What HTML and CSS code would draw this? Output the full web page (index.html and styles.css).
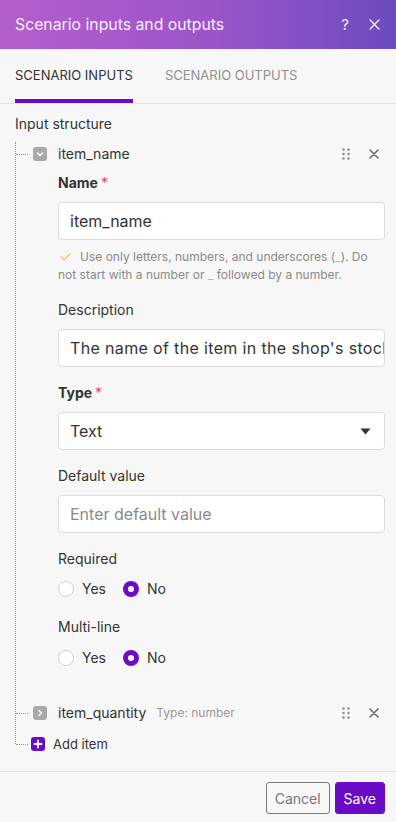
FILE: index.html
```html
<!DOCTYPE html>
<html lang="en">

<head>
    <meta charset="UTF-8">
    <meta name="viewport" content="width=device-width, initial-scale=1.0">
    <title>Scenario inputs and outputs</title>
    <link rel="stylesheet" href="styles.css">
</head>

<body>
    <div class="modal">
        <!-- Header -->
        <div class="modal-header">
            <h1>Scenario inputs and outputs</h1>
            <div class="header-actions">
                <span class="help">?</span>
                <svg class="icon-close" width="11" height="11" viewBox="0 0 10 10">
                    <path d="M1 1L9 9M9 1L1 9" stroke="#f3e8fa" stroke-width="1.3" stroke-linecap="round" />
                </svg>
            </div>
        </div>

        <!-- Tabs -->
        <div class="tabs">
            <div class="tab active">Scenario inputs</div>
            <div class="tab">Scenario outputs</div>
        </div>

        <!-- Body -->
        <div class="modal-body">
            <div class="section-title">Input structure</div>

            <div class="tree">
                <!-- item_name -->
                <div class="node-row">
                    <span class="connector"></span>
                    <span class="toggle">
                        <svg width="14" height="14" viewBox="0 0 14 14">
                            <path d="M4.5 6L7 8.5L9.5 6" fill="none" stroke="#fff" stroke-width="1.5" stroke-linecap="round" stroke-linejoin="round" />
                        </svg>
                    </span>
                    <span class="node-name">item_name</span>
                    <span class="node-actions">
                        <svg width="8" height="12" viewBox="0 0 8 12" fill="#8a8a8a">
                            <circle cx="1.5" cy="1.5" r="1.2" />
                            <circle cx="6.5" cy="1.5" r="1.2" />
                            <circle cx="1.5" cy="6" r="1.2" />
                            <circle cx="6.5" cy="6" r="1.2" />
                            <circle cx="1.5" cy="10.5" r="1.2" />
                            <circle cx="6.5" cy="10.5" r="1.2" />
                        </svg>
                        <svg width="10" height="10" viewBox="0 0 10 10">
                            <path d="M1 1L9 9M9 1L1 9" stroke="#666" stroke-width="1.5" stroke-linecap="round" />
                        </svg>
                    </span>
                </div>

                <div class="node-body">
                    <div class="field">
                        <label class="label strong">Name<span class="req">*</span></label>
                        <div class="input">item_name</div>
                        <p class="hint">
                            <svg class="check" width="11" height="8" viewBox="0 0 11 8">
                                <path d="M1 3.8L4 6.8L10 1" fill="none" stroke="#e8c45e" stroke-width="1.3" stroke-linecap="round" stroke-linejoin="round" />
                            </svg>Use only letters, numbers, and underscores (<span class="us">_</span>). Do not start with a number or <span class="us">_</span> followed by a number.
                        </p>
                    </div>

                    <div class="field">
                        <label class="label">Description</label>
                        <div class="input clip">The name of the item in the shop's stock</div>
                    </div>

                    <div class="field">
                        <label class="label strong">Type<span class="req">*</span></label>
                        <div class="input select">
                            <span>Text</span>
                            <svg width="11" height="7" viewBox="0 0 11 7">
                                <path d="M0.5 0.5H10.5L5.5 6.5Z" fill="#333" />
                            </svg>
                        </div>
                    </div>

                    <div class="field">
                        <label class="label">Default value</label>
                        <div class="input placeholder">Enter default value</div>
                    </div>

                    <div class="field">
                        <label class="label">Required</label>
                        <div class="radios">
                            <span class="radio"></span><span class="radio-label">Yes</span>
                            <span class="radio checked"></span><span class="radio-label">No</span>
                        </div>
                    </div>

                    <div class="field multi">
                        <label class="label">Multi-line</label>
                        <div class="radios">
                            <span class="radio"></span><span class="radio-label">Yes</span>
                            <span class="radio checked"></span><span class="radio-label">No</span>
                        </div>
                    </div>
                </div>

                <!-- item_quantity -->
                <div class="node-row">
                    <span class="connector"></span>
                    <span class="toggle">
                        <svg width="14" height="14" viewBox="0 0 14 14">
                            <path d="M6 4.5L8.5 7L6 9.5" fill="none" stroke="#fff" stroke-width="1.5" stroke-linecap="round" stroke-linejoin="round" />
                        </svg>
                    </span>
                    <span class="node-name">item_quantity</span>
                    <span class="node-type">Type: number</span>
                    <span class="node-actions">
                        <svg width="8" height="12" viewBox="0 0 8 12" fill="#8a8a8a">
                            <circle cx="1.5" cy="1.5" r="1.2" />
                            <circle cx="6.5" cy="1.5" r="1.2" />
                            <circle cx="1.5" cy="6" r="1.2" />
                            <circle cx="6.5" cy="6" r="1.2" />
                            <circle cx="1.5" cy="10.5" r="1.2" />
                            <circle cx="6.5" cy="10.5" r="1.2" />
                        </svg>
                        <svg width="10" height="10" viewBox="0 0 10 10">
                            <path d="M1 1L9 9M9 1L1 9" stroke="#666" stroke-width="1.5" stroke-linecap="round" />
                        </svg>
                    </span>
                </div>

                <!-- Add item -->
                <div class="node-row add-row">
                    <span class="connector"></span>
                    <span class="add-icon">
                        <svg width="14" height="14" viewBox="0 0 14 14">
                            <path d="M7 3.5V10.5M3.5 7H10.5" stroke="#fff" stroke-width="1.8" stroke-linecap="round" />
                        </svg>
                    </span>
                    <span class="add-label">Add item</span>
                </div>
            </div>
        </div>

        <!-- Footer -->
        <div class="modal-footer">
            <button class="btn btn-cancel">Cancel</button>
            <button class="btn btn-save">Save</button>
        </div>
    </div>
</body>

</html>
```

FILE: styles.css
```css
/* Basic Reset */
* {
    margin: 0;
    padding: 0;
    box-sizing: border-box;
}

body {
    font-family: 'Inter', 'Noto Sans', sans-serif;
    background: #f7f7f7;
    color: #333;
    width: 396px;
    height: 822px;
    overflow: hidden;
}

.modal {
    display: flex;
    flex-direction: column;
    height: 822px;
}

/* Header */
.modal-header {
    height: 49px;
    display: flex;
    align-items: center;
    justify-content: space-between;
    padding: 0 16px 0 15px;
    background: linear-gradient(90deg, #b45ecd, #9a55c8 55%, #6c4bc0);
}

.modal-header h1 {
    font-size: 15.8px;
    font-weight: 400;
    color: #f6eefb;
}

.header-actions {
    display: flex;
    align-items: center;
    gap: 20px;
}

.help {
    font-size: 15px;
    color: #f3e8fa;
}

/* Tabs */
.tabs {
    display: flex;
    gap: 32px;
    height: 55px;
    padding: 0 15px;
    border-bottom: 1px solid #e3e3e3;
}

.tab {
    display: flex;
    align-items: center;
    padding-top: 2px;
    text-transform: uppercase;
    font-size: 13px;
    color: #8f8f8f;
    border-bottom: 4px solid transparent;
}

.tab.active {
    color: #333;
    border-bottom-color: #6a0cc6;
}

/* Body */
.modal-body {
    flex: 1;
    padding: 10px 11px 0 15px;
}

.section-title {
    font-size: 14px;
    line-height: 20px;
}

.tree {
    position: relative;
    margin-top: 8px;
}

/* vertical dotted guide */
.tree::before {
    content: "";
    position: absolute;
    left: 0;
    top: 0;
    bottom: 10px;
    border-left: 1px dotted #999;
}

.node-row {
    display: flex;
    align-items: center;
    height: 24px;
}

.connector {
    width: 12px;
    margin-left: 1px;
    border-top: 1px dotted #999;
}

.toggle {
    width: 14px;
    height: 14px;
    margin-left: 5px;
    border-radius: 3px;
    background: #a9a9a9;
    display: flex;
}

.node-name {
    margin-left: 11px;
    font-size: 14px;
    line-height: 20px;
}

.node-type {
    margin-left: 10px;
    font-size: 12px;
    color: #999;
    padding-bottom: 2px;
}

.node-actions {
    margin-left: auto;
    display: flex;
    align-items: center;
    gap: 19px;
    padding-right: 6px;
}

.node-body {
    padding: 7px 0 33px 43px;
}

.field + .field {
    margin-top: 16px;
}

.label {
    display: block;
    font-size: 14px;
    line-height: 20px;
    height: 20px;
    color: #333;
}

.label.strong {
    font-weight: 700;
}

.req {
    color: #e0465b;
    font-weight: 400;
    margin-left: 3px;
}

.input {
    margin-top: 9px;
    height: 38px;
    background: #fff;
    border: 1px solid #dcdcdc;
    border-radius: 4px;
    padding: 0 11px;
    display: flex;
    align-items: center;
    font-size: 16px;
    line-height: 20px;
    color: #333;
    white-space: nowrap;
    overflow: hidden;
}

.input.clip {
    letter-spacing: 0.35px;
}

.input.placeholder {
    color: #8a8a8a;
}

.input.select {
    justify-content: space-between;
    padding-right: 13px;
}

.hint {
    margin-top: 8px;
    font-size: 12px;
    line-height: 18px;
    height: 36px;
    color: #8a8a8a;
}

.check {
    margin: 0 9px 0 2px;
}

.us {
    color: #f0a0a8;
}

.radios {
    margin-top: 10px;
    display: flex;
    align-items: center;
    height: 20px;
}

.radio {
    width: 16px;
    height: 16px;
    border-radius: 50%;
    background: #fff;
    border: 1px solid #d0d0d0;
}

.radio.checked {
    border: 5px solid #6a0cc6;
}

.radio-label {
    margin: 0 17px 0 8px;
    font-size: 14px;
    line-height: 20px;
}

.field.multi {
    margin-top: 18px;
}

.field.multi .radios {
    margin-top: 11px;
}

.add-row {
    margin-top: 9px;
    height: 20px;
}

.add-icon {
    width: 14px;
    height: 14px;
    margin-left: 3px;
    border-radius: 3px;
    background: #6a0cc6;
    display: flex;
}

.add-label {
    margin-left: 8px;
    font-size: 13px;
}

/* Footer */
.modal-footer {
    border-top: 1px solid #e3e3e3;
    padding: 10px 11px 8px 0;
    display: flex;
    justify-content: flex-end;
    gap: 5px;
}

.btn {
    height: 32px;
    padding: 0 8px;
    border-radius: 3px;
    font-family: 'Inter', sans-serif;
    font-size: 14px;
}

.btn-cancel {
    background: #f7f7f7;
    border: 1px solid #7a7a7a;
    color: #777;
}

.btn-save {
    background: #6a0cc6;
    border: 1px solid #6a0cc6;
    color: #fff;
}
```
